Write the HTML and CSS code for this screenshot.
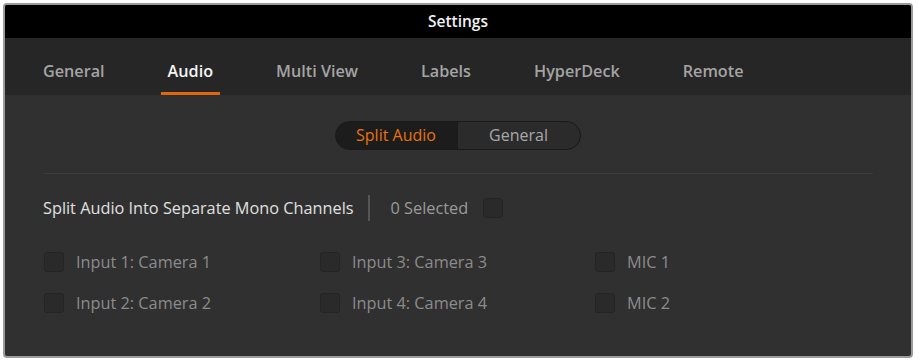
FILE: index.html
```html
<!DOCTYPE html>
<html>
<head>
<meta charset="utf-8">
<link rel="stylesheet" href="styles.css">
</head>
<body>
<div class="window">
  <div class="titlebar">Settings</div>
  <div class="tabs">
    <div class="tab">General</div>
    <div class="tab active">Audio</div>
    <div class="tab">Multi View</div>
    <div class="tab">Labels</div>
    <div class="tab">HyperDeck</div>
    <div class="tab">Remote</div>
  </div>
  <div class="content">
    <div class="segwrap">
      <div class="seg">
        <div class="seg-item on">Split Audio</div>
        <div class="seg-item">General</div>
      </div>
    </div>
    <div class="sep"></div>
    <div class="splitrow">
      <span class="splitlabel">Split Audio Into Separate Mono Channels</span>
      <span class="vbar"></span>
      <span class="count">0 Selected</span>
      <span class="box"></span>
    </div>
    <div class="grid">
      <div class="item"><span class="box"></span><span>Input 1: Camera 1</span></div>
      <div class="item"><span class="box"></span><span>Input 3: Camera 3</span></div>
      <div class="item"><span class="box"></span><span>MIC 1</span></div>
      <div class="item"><span class="box"></span><span>Input 2: Camera 2</span></div>
      <div class="item"><span class="box"></span><span>Input 4: Camera 4</span></div>
      <div class="item"><span class="box"></span><span>MIC 2</span></div>
    </div>
  </div>
</div>
</body>
</html>
```
FILE: styles.css
```css
html, body {
  margin: 0;
  padding: 0;
  background: #ffffff;
}
body {
  font-family: "Open Sans", "Liberation Sans", sans-serif;
  width: 918px;
  height: 361px;
  overflow: hidden;
}
.window {
  margin: 3px 0 0 3px;
  width: 906px;
  height: 351px;
  border: 2px solid #9b9b9b;
  border-radius: 4px;
  background: #303030;
  overflow: hidden;
  display: flex;
  flex-direction: column;
}
.titlebar {
  height: 33px;
  background: #000;
  color: #f2f2f2;
  font-weight: 600;
  font-size: 15.5px;
  display: flex;
  align-items: center;
  justify-content: center;
  padding-bottom: 1px;
  box-sizing: border-box;
}
.tabs {
  height: 57px;
  background: #262626;
  display: flex;
  padding-left: 31px;
  gap: 49px;
}
.tab {
  padding: 12px 7px 0;
  display: flex;
  align-items: center;
  color: #a4a4a4;
  font-weight: 600;
  font-size: 16.2px;
  border-bottom: 3px solid transparent;
}
.tab.active {
  color: #f4f4f4;
  border-bottom-color: #e2660b;
}
.content {
  flex: 1;
  padding: 0 36px 0 38px;
}
.segwrap {
  display: flex;
  justify-content: center;
  padding-top: 26px;
  padding-right: 3px;
}
.seg {
  display: flex;
  height: 27px;
  border: 1px solid #1a1a1a;
  border-radius: 15px;
  overflow: hidden;
  background: #2b2b2b;
}
.seg-item {
  width: 122px;
  display: flex;
  align-items: center;
  justify-content: center;
  font-size: 16px;
  color: #a8a8a8;
  padding-bottom: 1px;
  box-sizing: border-box;
}
.seg-item.on {
  background: #1c1c1c;
  color: #e8720f;
  border-right: 1px solid #1a1a1a;
}
.sep {
  margin-top: 23px;
  margin-right: 2px;
  height: 1px;
  background: #3b3b3b;
}
.splitrow {
  display: flex;
  align-items: center;
  height: 28px;
  margin-top: 20px;
  font-size: 16.3px;
}
.splitlabel {
  color: #e0e0e0;
}
.vbar {
  width: 2px;
  height: 26px;
  background: #555;
  margin: 0 21px 0 14px;
}
.count {
  color: #9a9a9a;
  margin-right: 15px;
}
.box {
  width: 20px;
  height: 20px;
  background: #2a2a2a;
  border: 1px solid #242424;
  border-radius: 3px;
  box-sizing: border-box;
  flex: none;
}
.grid {
  display: grid;
  grid-template-columns: 276px 275px 1fr;
  row-gap: 21px;
  margin-top: 30px;
  padding-left: 1px;
}
.item {
  display: flex;
  align-items: center;
  gap: 12px;
  height: 20px;
  font-size: 16.3px;
  color: #8c8c8c;
}
```
